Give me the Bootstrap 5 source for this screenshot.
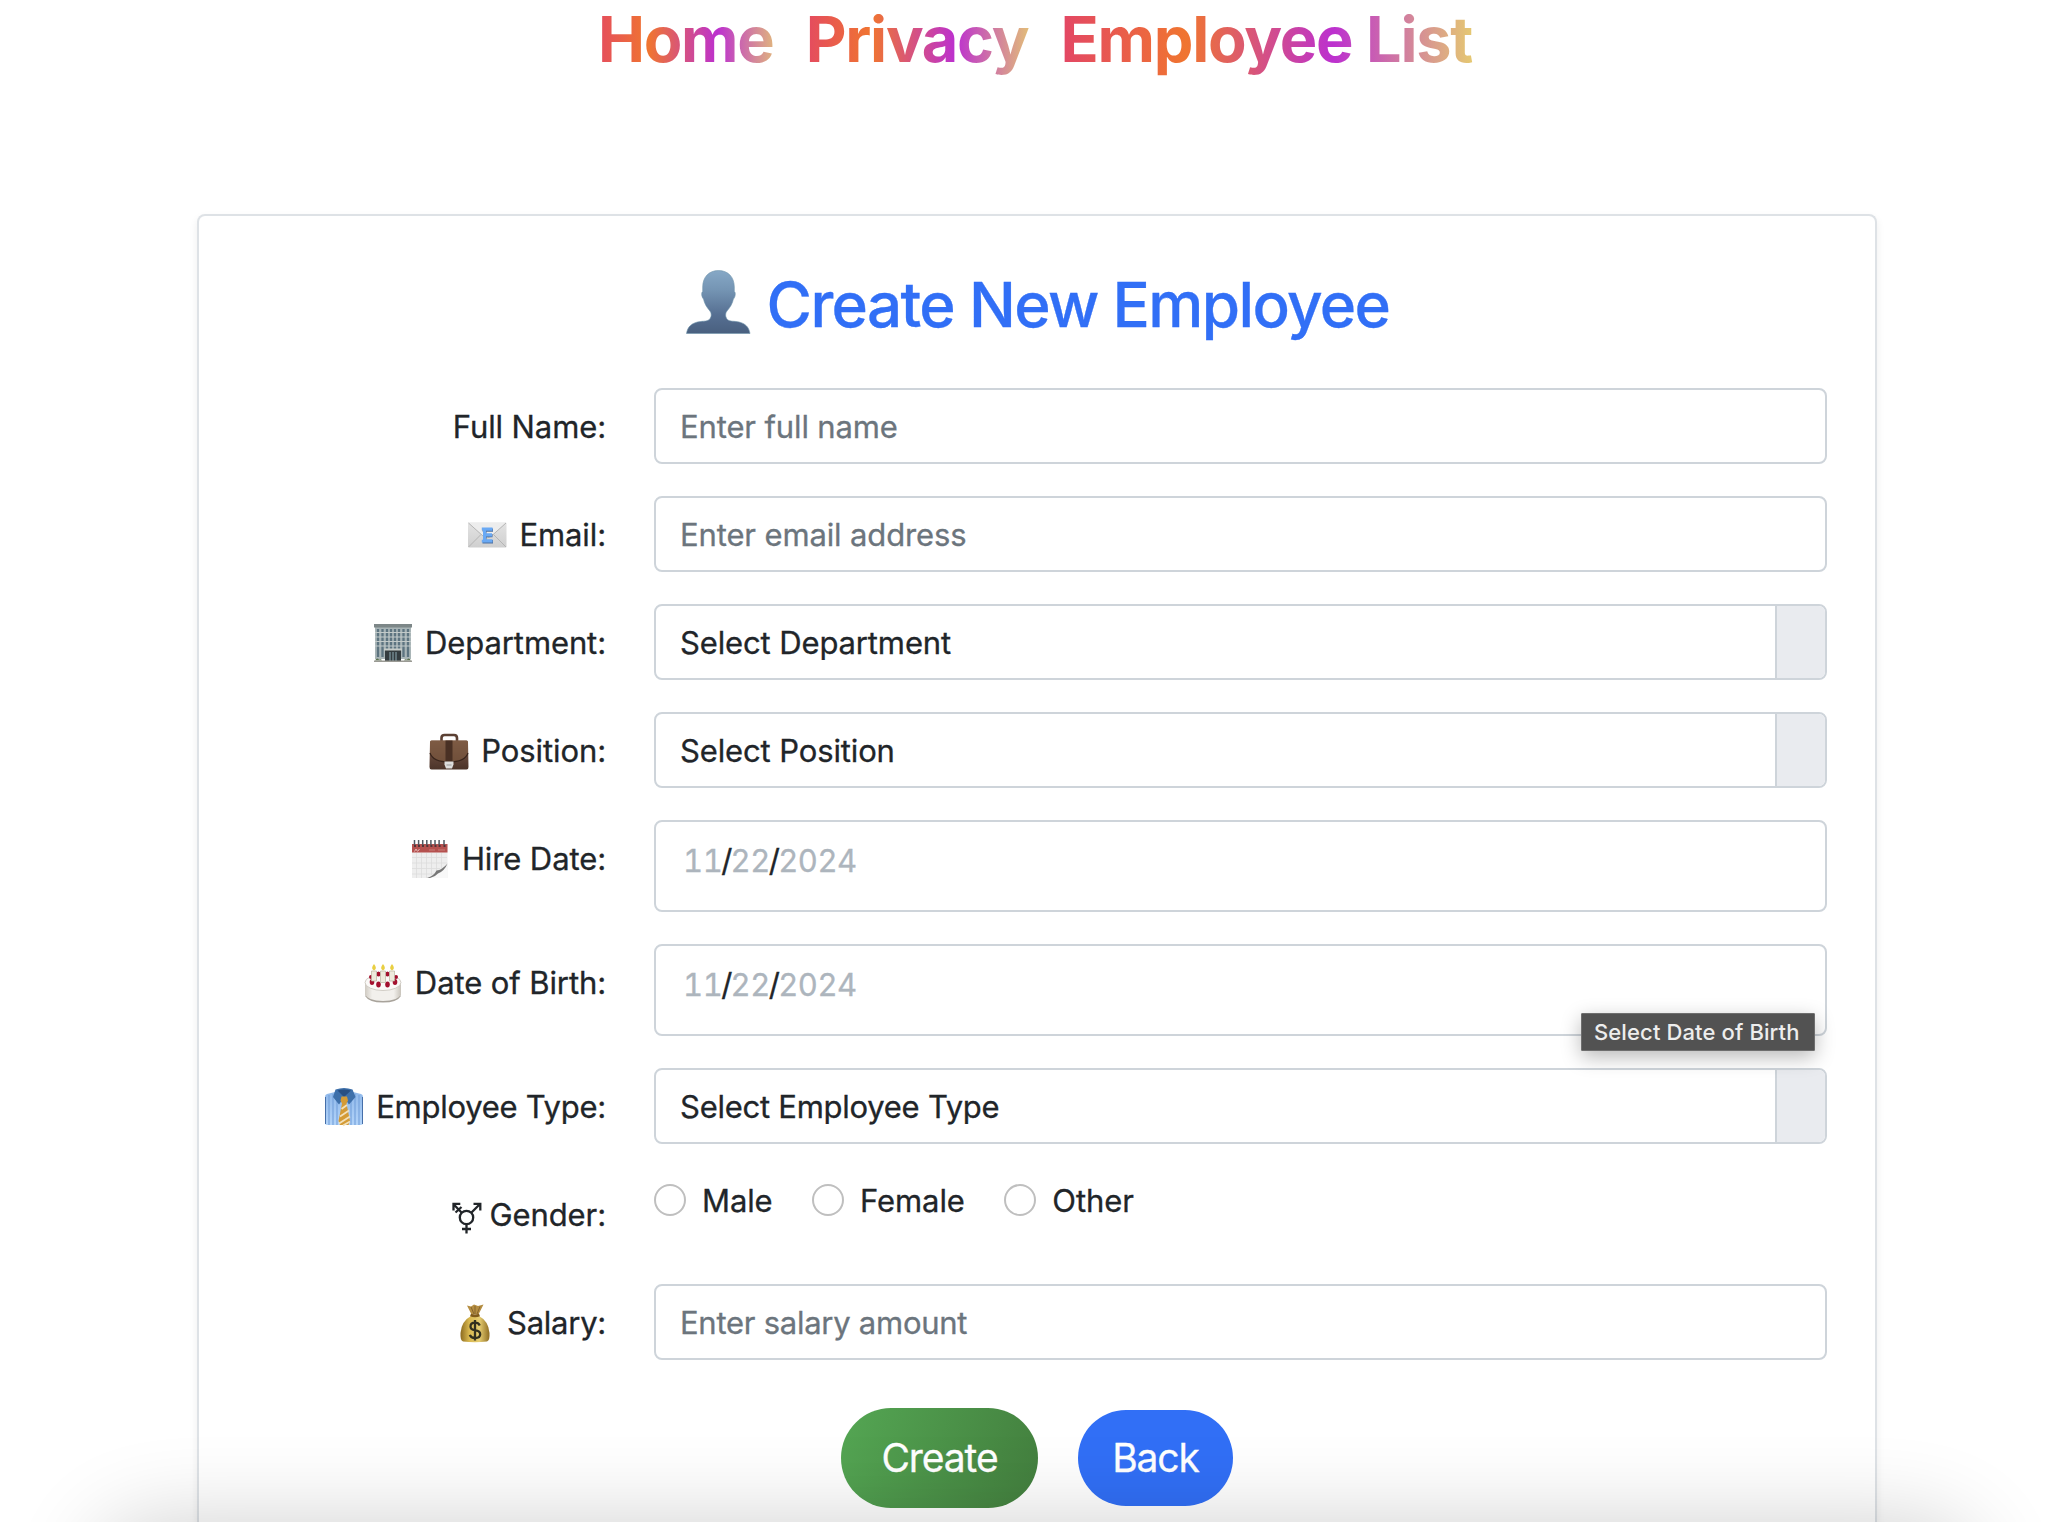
<!DOCTYPE html>
<html lang="en">
<head>
<meta charset="utf-8">
<meta name="viewport" content="width=device-width, initial-scale=1">
<title>Create New Employee</title>
<link href="https://cdn.jsdelivr.net/npm/bootstrap@5.3.0/dist/css/bootstrap.min.css" rel="stylesheet">
<style>
body{font-family:Inter,"Liberation Sans",sans-serif;font-size:31px;line-height:48px;letter-spacing:-.1px;color:#212529;height:1522px;overflow:hidden;background:#fff}
main,.form-control{-webkit-text-stroke:.3px}
.top-links{height:78px;padding-left:24px}
.top-links .nav-link{padding:0 16px;font-size:63px;font-weight:700;line-height:78px;letter-spacing:-1.25px;color:transparent;background:linear-gradient(90deg,#e1406c,#f07530 32%,#bc30cf 65%,#e6cb70 97%);-webkit-background-clip:text;background-clip:text}
.employee-card{width:1680px;height:1308px;margin:136px 0 0 197px;border:2px solid #dee2e6;border-bottom:0;border-radius:8px 8px 0 0;box-shadow:0 4px 8px rgba(0,0,0,.075)}
.employee-card>.card-body{padding:48px 48px 0}
.form-title{font-size:62px;font-weight:500;line-height:76px;letter-spacing:-1.65px;color:#316ff6;margin-bottom:48px}
.form-title svg{width:66px;height:64px;margin-right:16px;flex:none}
.form-title span{padding-top:3px;margin-bottom:-3px}
.field-row{--bs-gutter-x:48px;margin-bottom:32px}
.field-label{height:76px;padding-top:2px;padding-bottom:0;display:flex;align-items:center;justify-content:flex-end;white-space:nowrap}
.field-label svg{width:40px;height:40px;flex:none;margin-right:12px}
.field-label .gender-mark{width:30px;height:32px;margin:6px 8px 0 0}
.field-row .form-control{height:76px;padding:12px 24px;border:2px solid #ced4da;border-radius:8px;font-size:31px;line-height:48px;letter-spacing:-.13px;color:#212529;background:#fff}
.field-row .form-control::placeholder{color:#6c757d;opacity:1}
.field-row .date-box{height:92px;padding:15px 27px;letter-spacing:-.45px;font-feature-settings:"tnum"}
.date-box span{color:#adb5bd}
.date-box i{font-style:normal;margin:0 -1.3px 0 -1.2px}
.field-row .select-box{padding:13px 0 11px 24px;display:flex}
.select-box::after{content:"";margin:-13px 0 -11px auto;width:50px;border-left:2px solid #ced4da;border-radius:0 6px 6px 0;background:#e9ebef}
.tight,.field-row .tight{letter-spacing:-.26px}
.gender-opt{display:flex;align-items:center;height:50px;margin:0 39.500px 0 0;padding:0;min-height:0}
.gender-opt .form-check-input{width:32px;height:32px;margin:-2px 16px 0 0;float:none;border:2px solid #bfbfbf}
.tip{position:absolute;right:36px;top:69px;width:234px;height:38px;border:1px solid #6e6e6e;border-radius:1px;background:#525252;color:#ededed;font-size:22px;font-weight:500;line-height:36px;letter-spacing:.12px;padding-left:12px;white-space:nowrap;box-shadow:0 6px 20px rgba(0,0,0,.28);z-index:5;-webkit-text-stroke:0}
.actions{gap:40px;margin-top:48px;height:100px}
.pill{border:0;border-radius:50px;color:#fff;font-size:39px;letter-spacing:-1.1px;line-height:48px;padding:0}
.pill-create{width:197px;height:100px;background:linear-gradient(105deg,#54a653,#437f3e)}
.pill-back{width:155px;height:96px;background:#316ff6}
.page-shade{position:fixed;top:100%;left:96px;right:70px;height:300px;border-radius:60px;box-shadow:0 0 88px rgba(0,0,0,.19);z-index:20}
</style>
</head>
<body>
<nav class="nav top-links justify-content-center flex-nowrap">
  <a class="nav-link" href="#">Home</a>
  <a class="nav-link" href="#">Privacy</a>
  <a class="nav-link" href="#">Employee List</a>
</nav>

<main class="card employee-card">
  <div class="card-body">
    <h1 class="form-title d-flex align-items-center justify-content-center">
      <svg viewBox="0 0 66 64" aria-hidden="true">
        <defs><linearGradient id="bust" x1="0" y1="0" x2="0" y2="1"><stop offset="0" stop-color="#86a8c6"/><stop offset=".3" stop-color="#7595b4"/><stop offset=".7" stop-color="#566f92"/><stop offset="1" stop-color="#49607f"/></linearGradient></defs>
        <path fill="url(#bust)" stroke="#6e93ab" stroke-width=".6" d="M33.500 .5C43 .5 49.300 7 49.300 17v4.500c1.700.7 1 6-.9 7.500-.8 4.500-3.400 8.500-6.400 12-1.600 1.700-1.500 4.200-1.100 5.800C42.200 51.500 46.500 51 51 51.500 60 52.500 64 57 65 63.500H1.500C2.500 57 6.500 52.500 15.500 51.500 20 51 24.500 51.500 25.900 46.800c.5-1.600.5-4.100-1-5.800-3-3.500-5.600-7.500-6.400-12-1.900-1.500-2.500-6.800-.8-7.500V17C17.700 7 24 .5 33.500 .5Z"/>
      </svg>
      <span>Create New Employee</span>
    </h1>

    <form>
      <div class="row field-row">
        <label class="col-3 field-label" for="fullName">Full Name:</label>
        <div class="col-9"><input id="fullName" class="form-control" type="text" placeholder="Enter full name"></div>
      </div>

      <div class="row field-row">
        <label class="col-3 field-label" for="email">
          <svg viewBox="0 0 40 40" aria-hidden="true">
            <defs><linearGradient id="env" x1="0" y1="0" x2="0" y2="1"><stop offset="0" stop-color="#e3e3e3"/><stop offset="1" stop-color="#cfcfcf"/></linearGradient></defs>
            <rect x="1" y="7.500" width="38.500" height="25" rx="1" fill="url(#env)"/>
            <path d="M1.500 8 16 21Q20.300 24.500 24.500 21L39 8Z" fill="#ededed"/>
            <path d="M1.500 8 16 21Q20.300 24.500 24.500 21L39 8M1.500 32 14 19.500M39 32 26.500 19.500" fill="none" stroke="#b5b5b5" stroke-width="1"/>
            <path d="M15.500 13.500H26v3.200h-6.500V19H25.500v3.200h-6V25H26v3.500H15.500v-3h1.500v-9h-1.500Z" fill="#4c6f9f"/>
            <path d="M14.800 12.500H25.500v3.200h-6.500v2.600H25v3.200h-6v2.800h6.500v3.200H14.800v-2.800h1.200v-9.400h-1.200Z" fill="#6aa9f4"/>
          </svg>
          Email:</label>
        <div class="col-9"><input id="email" class="form-control" type="text" placeholder="Enter email address"></div>
      </div>

      <div class="row field-row">
        <label class="col-3 field-label">
          <svg viewBox="0 0 40 40" aria-hidden="true">
            <path d="M2 2H38V36H2Z" fill="#a9b5b7"/>
            <path d="M1 1H39V4.500H1Z" fill="#7d8788"/>
            <path d="M5 6v28M9.500 6v28M14 6v28M18 6v20M22 6v20M26 6v28M30.500 6v28M35 6v28" stroke="#5d7480" stroke-width="2.300"/>
            <path d="M2 9.500H38M2 14H38M2 18.500H38M2 23H38" stroke="#c2cac9" stroke-width="1.200"/>
            <path d="M12 27h16v11H12Z" fill="#343c3f"/><path d="M17 29v9M20 29v9M23 29v9" stroke="#8eabb5" stroke-width="1"/>
            <path d="M11 25.500h18v2H11Z" fill="#c6ccc9"/>
            <path d="M2 37.500q2-3.500 4-1 2-1 3 1ZM38 37.500q-2-3.500-4-1-2-1-3 1Z" fill="#5d7352"/>
            <path d="M1 37.500H39V39H1Z" fill="#9a9a94"/>
          </svg>
          Department:</label>
        <div class="col-9"><div class="form-control select-box">Select Department</div></div>
      </div>

      <div class="row field-row">
        <label class="col-3 field-label">
          <svg viewBox="0 0 40 40" aria-hidden="true">
            <defs><linearGradient id="bag" x1="0" y1="0" x2="0" y2="1"><stop offset="0" stop-color="#8a6753"/><stop offset=".5" stop-color="#65473a"/><stop offset="1" stop-color="#4b3329"/></linearGradient></defs>
            <path d="M12.500 10V7q0-3 3-3h9.500q3 0 3 3v3" fill="none" stroke="#5b4033" stroke-width="2.600"/>
            <path d="M2.500 9.500H37.500Q39 9.500 39 11L39.500 36q0 2.500-2 2.500H2.500Q.5 38.500.5 36L1 11Q1 9.500 2.500 9.500Z" fill="url(#bag)"/>
            <path d="M1 11Q1 9.500 2.500 9.500H37.500Q39 9.500 39 11v11Q36 31 20 31 4 31 1 22Z" fill="#79573f" opacity=".75"/>
            <path d="M1 22Q4 31 20 31 36 31 39 22" fill="none" stroke="#38241b" stroke-width="1.200"/>
            <path d="M16.500 9.500h7V30h-7Z" fill="#493024"/>
            <path d="M15.500 30.500h9v3l-1.500 4h-6l-1.500-4Z" fill="#dedede"/><path d="M17.500 34h5" stroke="#999" stroke-width="1"/>
          </svg>
          Position:</label>
        <div class="col-9"><div class="form-control select-box">Select Position</div></div>
      </div>

      <div class="row field-row">
        <label class="col-3 field-label">
          <svg viewBox="0 0 40 40" aria-hidden="true">
            <path d="M2 5H37.500V39H2Z" fill="#eee"/>
            <path d="M2 5H37.500V13.500H2Z" fill="#b5514f"/>
            <path d="M4.500 12.500 6 10l1.500 2.500M8 12l1.500-2" stroke="#e9c3c1" stroke-width=".9" fill="none"/><path d="M19 11h6M28 11h7" stroke="#d18a87" stroke-width=".8"/>
            <path d="M6.500 14v25M11.500 14v25M16.500 14v25M21.500 14v22M26.500 14v18M31.500 14v16M2 18.500H37M2 24H37M2 29.500H30M2 35H24" stroke="#dcdcdc" stroke-width=".8"/>
            <path d="M19 39Q24 38 26.500 32.500 31 31.500 37.500 24.500V39Z" fill="#f8f8f8"/>
            <path d="M17 39Q24 37 26.500 31.500 32 31 37.500 24.500 34.500 32 28 34.500 25 38 20 39Z" fill="#777"/>
            <path d="M4.500 6V1M8.600 6V1M12.700 6V1M16.800 6V1M20.900 6V1M25 6V1M29.100 6V1M34 6V1" stroke="#515963" stroke-width="1.500"/>
            <path d="M4 7h2M8 7h2M12 7h2M16.300 7h2M20.400 7h2M24.500 7h2M28.600 7h2M33.500 7h2" stroke="#302c32" stroke-width="1.500"/>
          </svg>
          Hire Date:</label>
        <div class="col-9"><div class="form-control date-box"><span>11</span><i>/</i><span>22</span><i>/</i><span>2024</span></div></div>
      </div>

      <div class="row field-row">
        <label class="col-3 field-label">
          <svg viewBox="0 0 40 40" aria-hidden="true">
            <defs><linearGradient id="cake" x1="0" x2="1"><stop offset="0" stop-color="#cfcac2"/><stop offset=".2" stop-color="#f2f0ec"/><stop offset=".8" stop-color="#f2f0ec"/><stop offset="1" stop-color="#c9c4bb"/></linearGradient></defs>
            <path d="M2.500 31v2.500Q6 39.500 20 39.500 34 39.500 37.500 33.500V31Z" fill="#a8a39b"/>
            <path d="M2 19V31.500Q5 38 20 38 35 38 38 31.500V19Z" fill="url(#cake)"/>
            <ellipse cx="20" cy="19.500" rx="18" ry="8" fill="#faf9f7" stroke="#c8c3ba" stroke-width=".8"/>
            <g fill="#a3102e"><ellipse cx="15.500" cy="11" rx="2.200" ry="2.500"/><ellipse cx="24.500" cy="11" rx="2.200" ry="2.500"/><circle cx="8" cy="14" r="2"/><circle cx="33" cy="14" r="2"/><ellipse cx="9" cy="19" rx="2.300" ry="3"/><ellipse cx="15.500" cy="21.500" rx="2.300" ry="3"/><ellipse cx="24.500" cy="21.500" rx="2.300" ry="3"/><ellipse cx="32" cy="19" rx="2.300" ry="3"/></g>
            <path d="M8.500 8h5v10h-5ZM17.500 8h5v11.500h-5ZM26.500 8h5v10h-5Z" fill="#eeeadd" stroke="#b9b3a0" stroke-width=".7"/>
            <path d="M11 1q3.800 4.500 0 6.500-3.800-2 0-6.500ZM20 1q3.800 4.500 0 6.500-3.800-2 0-6.500ZM29 1q3.800 4.500 0 6.500-3.800-2 0-6.500Z" fill="#e9cf42"/>
          </svg>
          Date of Birth:</label>
        <div class="col-9 position-relative">
          <div class="form-control date-box"><span>11</span><i>/</i><span>22</span><i>/</i><span>2024</span></div>
          <div class="tip">Select Date of Birth</div>
        </div>
      </div>

      <div class="row field-row">
        <label class="col-3 field-label tight">
          <svg viewBox="0 0 40 40" aria-hidden="true">
            <defs><linearGradient id="shirt" x1="0" y1="0" x2="0" y2="1"><stop offset="0" stop-color="#8fb8ea"/><stop offset="1" stop-color="#b3d4f9"/></linearGradient></defs>
            <path d="M11 5 3 7Q1 7.500 1 10V36q0 2 2 2H37q2 0 2-2V10q0-2.500-2-3L29 5Z" fill="url(#shirt)"/>
            <path d="M5 8v30M9 7v31M13 12v26M27 12v26M31 7v31M35 8v30" stroke="#77a3dc" stroke-width="1.200"/>
            <path d="M1.500 10V37M38.500 10V37" stroke="#466fa9" stroke-width="1"/>
            <path d="M11.500 2.500Q20 -.5 28.500 2.500L31.500 10 25 17.500 20 10.500 15 17.500 9 10Z" fill="#3e70aa"/>
            <path d="M13.500 3.500Q20 1.500 27 3.500L20 10Z" fill="#284f83"/>
            <path d="M17.500 9.500h5.500l1 4-1.500 3L26 34l-1.500 4h-8.500L14.500 34 18 16.500 16.500 13.500Z" fill="#d49b36"/>
            <path d="M17.500 22 23 18M16 29.500 25 23.500M15 36.500 26 29.500M19 38.500 26 34.500" stroke="#f2e1bb" stroke-width="1.800"/>
          </svg>
          Employee Type:</label>
        <div class="col-9"><div class="form-control select-box tight">Select Employee Type</div></div>
      </div>

      <div class="row field-row">
        <label class="col-3 field-label">
          <svg class="gender-mark" viewBox="0 0 30 32" aria-hidden="true" fill="none" stroke="#212529" stroke-width="2.300">
            <circle cx="14.500" cy="15.500" r="6.700"/>
            <path d="M14.500 22.500V31.500M10 27h9M19.500 10.500 28 2M21.500 1.800H28.300V8.500M9.500 10.500 1.800 2.500M1.500 8.500V1.800H8.300M3.500 10.500 9.500 5"/>
          </svg>
          Gender:</label>
        <div class="col-9 d-flex align-items-start">
          <label class="gender-opt"><input class="form-check-input" type="radio" name="gender">Male</label>
          <label class="gender-opt"><input class="form-check-input" type="radio" name="gender">Female</label>
          <label class="gender-opt"><input class="form-check-input" type="radio" name="gender">Other</label>
        </div>
      </div>

      <div class="row field-row">
        <label class="col-3 field-label tight" for="salary">
          <svg viewBox="0 0 40 40" aria-hidden="true">
            <defs><linearGradient id="sack" x1="0" x2="1"><stop offset="0" stop-color="#8b6a20"/><stop offset=".3" stop-color="#d9b84f"/><stop offset=".65" stop-color="#e6cd72"/><stop offset="1" stop-color="#8e6c21"/></linearGradient></defs>
            <path d="M12 2.500 16 3.500 19 1.500 23 3 28.500 1.500 23.500 11.500H16.500Z" fill="#b58e42"/>
            <path d="M16 4l3 7M20 3v8M25 3.500l-3 7.500" stroke="#80602a" stroke-width=".9"/>
            <path d="M16 13Q6.500 18 5.500 30 5 37 8 38.500 20 40 32 38.500 35 37 34.500 30 33.500 18 24 13Z" fill="url(#sack)"/>
            <path d="M15.500 12q4.500 1.800 9 0" stroke="#805b1b" stroke-width="2.600" fill="none"/>
            <path d="M24.800 22.500Q23.500 19.700 20 19.700 15.500 19.700 15.500 23.500 15.500 26.500 20 27.200 25.200 28 25.200 31.300 25.200 35 20 35 16 35 14.800 31.800M20 17V37.500" fill="none" stroke="#33301f" stroke-width="2.300"/>
          </svg>
          Salary:</label>
        <div class="col-9"><input id="salary" class="form-control tight" type="text" placeholder="Enter salary amount"></div>
      </div>

      <div class="actions d-flex align-items-center justify-content-center">
        <button type="button" class="btn pill pill-create">Create</button>
        <button type="button" class="btn pill pill-back">Back</button>
      </div>
    </form>
  </div>
</main>
<div class="page-shade"></div>
<script src="https://cdn.jsdelivr.net/npm/bootstrap@5.3.0/dist/js/bootstrap.bundle.min.js"></script>
</body>
</html>
